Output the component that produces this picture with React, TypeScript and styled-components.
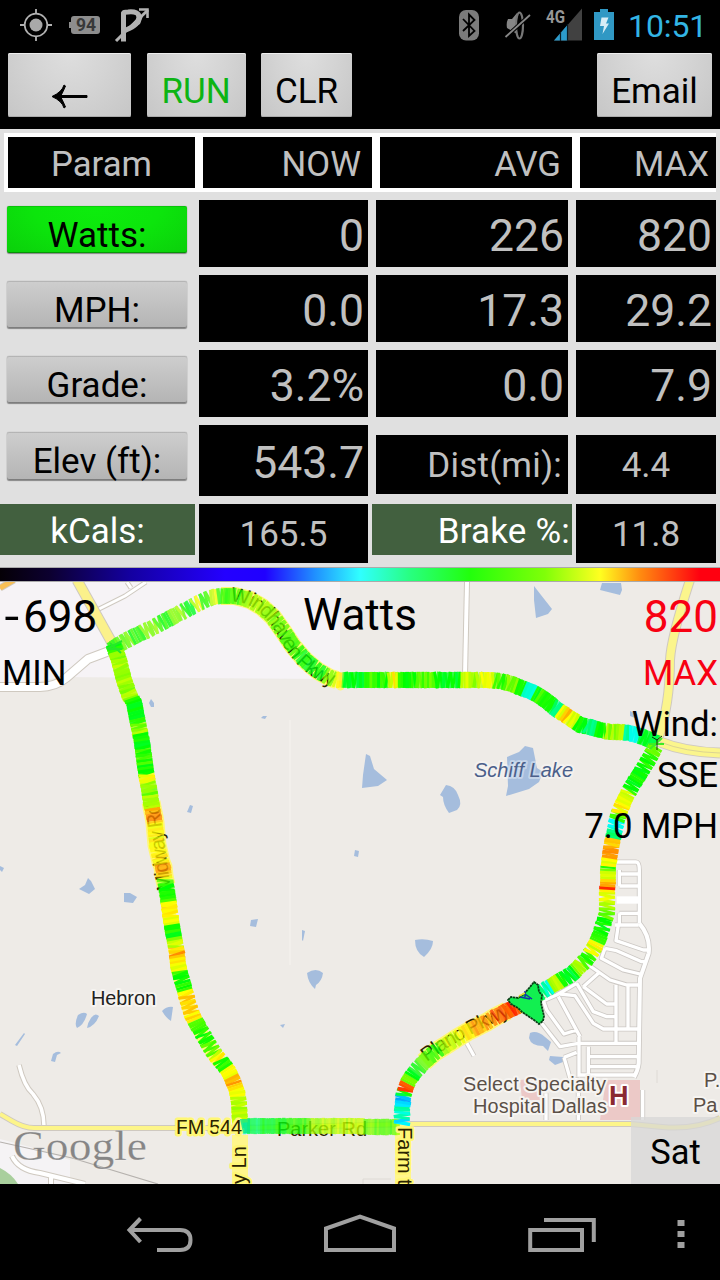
import type { ReactNode } from "react";
import styled, { createGlobalStyle } from "styled-components";

const GlobalStyle = createGlobalStyle`
    * {
        box-sizing: border-box;
    }
    body {
        margin: 0;
        background: #000;
        font-family: Roboto, "Liberation Sans", sans-serif;
    }
`;

/* ---------- ride track ---------- */

// x, y, hue (0 red, 60 yellow, 120 green, 180 cyan)
type TrackPoint = [number, number, number];

const NORTH: TrackPoint[] = [
    [112, 649, 118], [125, 641, 95], [137, 635, 115], [150, 629, 88], [165, 621, 118], [178, 614, 88], [190, 608, 130],
    [195, 605, 62], [205, 600, 110], [213, 597, 65], [221, 596, 118], [235, 596, 108], [250, 600, 85], [262, 607, 85],
    [273, 617, 95], [283, 631, 105], [293, 646, 110], [305, 660, 128], [318, 671, 122], [330, 678, 85], [337, 680, 58],
    [345, 680, 122], [358, 680, 130], [370, 680, 100], [384, 680, 115], [392, 680, 62], [402, 680, 115], [430, 680, 98],
    [440, 680, 125], [458, 680, 125], [465, 680, 65], [473, 680, 85], [487, 680, 65], [500, 681, 105], [512, 684, 90],
    [521, 688, 125], [530, 691, 172], [538, 695, 110], [548, 702, 118], [556, 709, 155], [564, 714, 50], [573, 720, 70],
    [580, 725, 130], [590, 727, 150], [600, 730, 115], [610, 732, 80], [620, 732, 85], [629, 733, 170], [637, 735, 178],
    [643, 737, 125], [657, 743, 130],
];

const WEST: TrackPoint[] = [
    [114, 646, 115], [119, 660, 80], [124, 680, 82], [130, 697, 85], [134, 702, 120], [137, 718, 118], [139, 728, 85],
    [142, 742, 120], [144, 757, 108], [146, 772, 120], [147, 778, 60], [149, 788, 92], [151, 802, 80], [153, 812, 35],
    [154, 817, 34], [155, 823, 58], [157, 845, 62], [161, 862, 58], [163, 867, 35], [164, 876, 60], [166, 885, 115],
    [168, 898, 108], [169, 905, 52], [171, 920, 65], [173, 932, 118], [175, 942, 75], [177, 953, 42], [178, 965, 60],
    [181, 977, 120], [184, 987, 115], [186, 995, 48], [192, 1015, 55], [197, 1024, 108], [205, 1038, 118],
    [212, 1050, 95], [217, 1057, 60], [224, 1065, 118], [229, 1072, 60], [233, 1081, 42], [237, 1091, 65],
    [239, 1103, 82], [240, 1123, 75],
];

const SOUTH: TrackPoint[] = [
    [242, 1126, 160], [252, 1126, 140], [268, 1126, 125], [285, 1126, 118], [300, 1126, 105], [312, 1126, 88],
    [318, 1126, 80], [330, 1126, 76], [355, 1126, 76], [372, 1127, 98], [388, 1127, 102], [400, 1127, 88],
];

const EAST: TrackPoint[] = [
    [402, 1123, 190], [402, 1117, 165], [402, 1107, 165], [403, 1104, 190], [403, 1097, 195], [404, 1093, 120],
    [405, 1091, 8], [406, 1087, 18], [409, 1080, 100], [415, 1072, 125], [424, 1062, 100], [435, 1052, 112],
    [445, 1046, 75], [457, 1038, 70], [467, 1032, 52], [477, 1027, 32], [487, 1022, 40], [495, 1017, 22],
    [507, 1011, 18], [527, 1002, 60], [540, 993, 140], [548, 988, 170], [556, 983, 68], [563, 979, 120],
    [572, 974, 130], [579, 967, 80], [587, 959, 110], [594, 948, 62], [599, 938, 115], [604, 922, 122],
    [607, 913, 90], [607, 900, 68], [607, 892, 60], [607, 889, 14], [608, 884, 50], [608, 876, 70], [608, 868, 105],
    [609, 862, 60], [610, 854, 36], [612, 843, 50], [614, 834, 160], [616, 824, 180], [618, 816, 100],
    [621, 808, 55], [625, 799, 70], [632, 786, 122], [641, 772, 120], [649, 759, 110], [656, 746, 85],
];

const rand = (n: number) => {
    const v = Math.sin(n * 127.1 + 311.7) * 43758.5453;
    return v - Math.floor(v);
};

interface Bar {
    x1: number;
    y1: number;
    x2: number;
    y2: number;
    width: number;
    color: string;
}

// one short bar across the road for every few meters ridden
const buildBars = (points: TrackPoint[], step: number, slant: number): Bar[] => {
    const bars: Bar[] = [];
    let carry = 0;
    let n = points.length;
    for (let i = 0; i < points.length - 1; i++) {
        const [ax, ay, ah] = points[i];
        const [bx, by, bh] = points[i + 1];
        const prev = points[Math.max(0, i - 1)];
        const next = points[Math.min(points.length - 1, i + 2)];
        const len = Math.hypot(bx - ax, by - ay);
        const dir = Math.hypot(next[0] - prev[0], next[1] - prev[1]) || 1;
        const ux = (next[0] - prev[0]) / dir;
        const uy = (next[1] - prev[1]) / dir;
        let d = carry;
        for (; d < len; d += step) {
            const t = d / len;
            const cx = ax + (bx - ax) * t;
            const cy = ay + (by - ay) * t;
            // GPS jitter comes in bursts, the rest of the bars lie flat
            const shaky = rand(Math.floor(n / 5) + 9) > 0.3;
            const s = shaky ? (n % 2 ? 1 : -1) * slant * (0.25 + rand(n) * 0.75) : 0;
            const half = 7.6 + rand(n + 5) * 0.6;
            const hue = ah + (bh - ah) * (t > 0.5 ? 0.85 : 0) + (rand(n + 40) - 0.5) * 18;
            bars.push({
                x1: cx - uy * half + ux * s,
                y1: cy + ux * half + uy * s,
                x2: cx + uy * half - ux * s,
                y2: cy - ux * half - uy * s,
                width: slant ? 2.4 + rand(n + 77) * 1.4 : 3.4,
                color: `hsl(${hue.toFixed(0)} 100% 50%)`,
            });
            n++;
        }
        carry = d - len;
    }
    return bars;
};

const toPath = (points: TrackPoint[]) => "M" + points.map(([x, y]) => `${x} ${y}`).join("L");

interface TrackProps {
    points: TrackPoint[];
    solid?: boolean;
}

const Track = ({ points, solid }: TrackProps) => (
    <g>
        {buildBars(points, solid ? 2.2 : 2.6, solid ? 0 : 1.9).map((b, i) => (
            <line key={i} x1={b.x1} y1={b.y1} x2={b.x2} y2={b.y2} stroke={b.color} strokeWidth={b.width} />
        ))}
    </g>
);

/* ---------- map ---------- */

const LAKES = [
    "M534 586L541 595L552 609L548 614L536 618L534 600Z",
    "M602 583H621L622 590L620 595L600 590Z",
    "M366 754L370 756L374 769L387 780L378 786L362 788L363 775Z",
    "M446 785Q455 786 458 795Q463 805 457 810L449 813Q443 805 443 797L440 795Z",
    "M507 757L519 752L525 746L533 748L537 768L543 772L539 782L529 789L506 796L508 786Z",
    "M151 699L154 703L154 707L151 707L149 703Z",
    "M263 716H267L265 719L261 718Z",
    "M190 805L193 806L191 813L187 812Z",
    "M355 850L359 851L358 857L354 856Z",
    "M88 878L91 881L95 889L89 894L79 889L85 885Z",
    "M124 893L130 893L137 897L133 903L124 902Z",
    "M251 920L258 919L256 927L250 926Z",
    "M302 930L305 931L303 941L302 940Z",
    "M307 973Q316 967 323 973Q322 981 316 985L315 989Q308 983 307 973Z",
    "M162 1011Q167 1006 173 1007L171 1021Q166 1018 162 1011Z",
    "M78 1015Q84 1011 87 1014Q84 1025 77 1028Q74 1024 78 1015Z",
    "M91 1018Q95 1012 99 1016Q95 1026 87 1028Q88 1022 91 1018Z",
    "M24 1033L25 1034L17 1046L15 1045Z",
    "M53 1054Q58 1050 61 1053L57 1055L55 1062L51 1061Z",
    "M280 1025L285 1024L283 1028Z",
    "M415 940Q424 938 433 941Q433 949 424 957Q415 952 415 940Z",
    "M530 1033Q537 1030 545 1037L551 1042L548 1051L543 1046Q531 1046 529 1038Z",
    "M550 1056L563 1057L563 1062L555 1065L549 1060Z",
    "M0 866L4 868L2 872L0 870Z",
    "M630 711L637 714L635 718L630 716Z",
];

// subdivision streets, in a 3x finer unit with its origin at (360, 870)
const STREETS =
    "M770-24H828Q838-24 838 0V160M778 0V48M775 12H836M778 48H836M778 130V162M778 130H836M765 165H836" +
    "M775 165L768 212L850 240H866M735 235L770 242L845 275H856M735 235L724 265L790 300L840 312" +
    "M690 288L750 330L800 345H838M768 345V520M804 350V480M650 340L700 425L740 440H765" +
    "M670 350L740 402H765M715 310L670 350M600 372L645 377L700 460L730 477H835" +
    "M550 392L590 375L650 340M550 392L560 420L612 492L650 480M595 380L660 500" +
    "M545 460L600 530L655 520H838M657 500V620M685 530V620M685 560H835M685 590H830" +
    "M660 615H825M612 562L650 547M612 562L630 625L655 630V750M558 670V750M848 660V750M318 515L342 558";

const Road = ({ d, color = "#fff", width }: { d: string; color?: string; width: number }) => (
    <g fill="none" strokeLinejoin="round">
        <path d={d} stroke="#cfc9c0" strokeWidth={width + 2} />
        <path d={d} stroke={color} strokeWidth={width} />
    </g>
);

const RideMap = () => (
    <MapCanvas viewBox="0 582 720 602">
        <defs>
            <path id="windhaven" d="M230 602Q256 600 277 634Q301 683 345 688" />
            <path id="midway" d="M171 890L157 792" />
            <path id="plano" d="M427 1062Q455 1040 520 1011" />
        </defs>
        <rect y="582" width="720" height="602" fill="#eeebe7" />
        <path d="M0 582H340V672L330 679L60 677L0 690Z" fill="#f6f3f6" />
        <path d="M290 720V965" stroke="#f2efeb" strokeWidth="2" />
        <path d="M0 1139L30 1147L70 1160V1184H0Z" fill="#f5f3f5" />
        <path d="M0 1168Q12 1174 18 1184H0Z" fill="#a9cf9d" />
        {LAKES.map((d) => (
            <path key={d} d={d} fill="#a5bddd" />
        ))}

        <path d="M606 1080H640V1120H600Z M520 1080L536 1078L540 1100H522Z" fill="#ecc9c7" />
        <Road d="M0 588L14 580" color="#f8bf55" width={5} />
        <Road d="M97 610L125 596L146 582M131 588L127 582" width={3} />
        <Road d="M0 687H40Q55 687 66 678L88 659L112 650" width={8} />
        <Road d="M467 582L465 676" width={4} />
        <Road d="M19 1065Q24 1086 33 1094Q44 1107 44 1126" width={3.5} />
        <Road d="M12 1156Q18 1170 40 1173L85 1184M51 1177V1184" width={4} />
        <path d="M0 1142L72 1158L158 1184" fill="none" stroke="#b5b1ad" strokeWidth="1.2" />
        <path d="M363 1184V1179H391M657 1070V1083" fill="none" stroke="#dedad5" />
        <g transform="translate(360 870) scale(.33333)" fill="none" strokeLinejoin="round">
            <path d={STREETS} stroke="#ccc8c4" strokeWidth="15" />
            <path d="M838 160Q872 200 866 250L840 325L836 580Q834 600 822 622" stroke="#ccc8c4" strokeWidth="17" />
            <path d="M838 160Q872 200 866 250L840 325L836 580Q834 600 822 622" stroke="#fff" strokeWidth="12" />
            <path d={STREETS} stroke="#fff" strokeWidth="10" />
            <path d="M770 90H838" stroke="#fff" strokeWidth="22" />
        </g>
        <Road d="M0 1114L12 1121Q24 1128 34 1128H240L410 1124H631L662 1127Q695 1130 720 1118" color="#fdf589" width={4} />
        <Road d="M77 580L116 650L130 696" color="#fbf18b" width={9} />
        <Road d="M690 580Q671 638 670 660Q670 705 658 739" color="#fbf58c" width={8} />
        <Road d="M660 742Q685 752 720 753" color="#fbf58c" width={9} />
        <path d="M660 742Q685 752 720 753" fill="none" stroke="#dcd493" />
        <path d={toPath(WEST)} fill="none" stroke="#fff774" strokeWidth="14" transform="translate(-1 0)" />
        <path d={toPath(WEST.slice(12, 21))} fill="none" stroke="#fff774" strokeWidth="19" />
        <path d={toPath(EAST.slice(10, 19))} fill="none" stroke="#fff774" strokeWidth="19" />
        <path d={toPath(NORTH.slice(10, 21))} fill="none" stroke="#fff774" strokeWidth="18" />
        <path d="M332 682Q338 694 344 689V680Z" fill="#fff774" />
        <path d="M232 1135H248V1184H232ZM395 1126H411V1184H395Z" fill="#fff68b" />

        <RoadLabel strokeWidth="0">
            <textPath href="#windhaven" textLength="138">
                Windhaven Pkwy
            </textPath>
        </RoadLabel>
        <RoadLabel strokeWidth="0">
            <textPath href="#midway" textLength="88">
                Midway Rd
            </textPath>
        </RoadLabel>
        <RoadLabel strokeWidth="0">
            <textPath href="#plano" textLength="96">
                Plano Pkwy
            </textPath>
        </RoadLabel>
        <RoadLabel x="277" y="1136" textLength="90" strokeWidth="0">
            Parker Rd
        </RoadLabel>

        {/* street names stay faintly readable below the ride */}
        <g opacity=".78">
            <Track points={NORTH} />
            <Track points={WEST.slice(0, 29)} />
            <Track points={SOUTH} solid />
            <Track points={EAST.slice(9, 20)} />
        </g>
        <Track points={NORTH.slice(21)} />
        <Track points={WEST.slice(0, 14)} />
        <Track points={WEST.slice(20)} />
        <Track points={EAST.slice(0, 10)} />
        <Track points={EAST.slice(18)} />
        <path d="M107 649L122 641M110 643L121 653M107 649H122" stroke="#25e82a" strokeWidth="2" />
        <path d="M649 744H664M650 749L662 738" stroke="#3cec24" strokeWidth="2" />
        <path d="M657 740V750M657 740L662 736M657 740L652 737" stroke="#102a10" strokeWidth="1" />

        <RoadLabel x="176" y="1134" textLength="66">
            FM 544
        </RoadLabel>
        <path d="M240 1119H250V1133H243Z" fill="#08e889" opacity=".8" />
        <RoadLabel transform="translate(246 1184) rotate(-90)">y Ln</RoadLabel>
        <RoadLabel transform="translate(398 1127) rotate(90)">Farm t</RoadLabel>

        <PlaceLabel x="91" y="1005" textLength="65">
            Hebron
        </PlaceLabel>
        <LakeLabel x="474" y="777" textLength="99">
            Schiff Lake
        </LakeLabel>
        <PoiLabel x="463" y="1091" textLength="143">
            Select Specialty
        </PoiLabel>
        <PoiLabel x="473" y="1113" textLength="134">
            Hospital Dallas
        </PoiLabel>
        <PoiLabel x="704" y="1087">P.</PoiLabel>
        <PoiLabel x="693" y="1112">Pa</PoiLabel>
        <HospitalMark x="609" y="1105">H</HospitalMark>
        <Watermark x="13" y="1160" textLength="134" lengthAdjust="spacingAndGlyphs">
            Google
        </Watermark>

        {/* rider */}
        <path
            d="M508 1000L511 997L518 998L524 994L530 987L534 982L538 985L539 992L542 995L541 1003L544 1016L543 1021L539 1024L534 1020L528 1016L522 1012L518 1008L511 1004Z"
            fill="#12ef50"
            stroke="#083d16"
            strokeWidth="1.8"
            strokeDasharray="2.5 .6"
        />
        <path d="M520 997L530 999M525 991V997M525 994L532 999" stroke="#1430a8" strokeWidth="1.5" />
        <path d="M519 996L525 993" stroke="#e5e332" strokeWidth="1.5" />
    </MapCanvas>
);

/* ---------- status bar ---------- */

const StatusBar = () => (
    <StyledStatusBar>
        <svg width="160" height="50" fill="none" stroke="#b2b2b2">
            <circle cx="36" cy="25" r="6.5" fill="#a9a9a9" stroke="none" />
            <circle cx="36" cy="25" r="11.3" strokeWidth="1.7" />
            <path d="M36 9V14M36 36V41M20 25H25M47 25H52" strokeWidth="1.8" />
            <path
                d="M74 16H97Q100 16 100 19V31Q100 34 97 34H74Q71 34 71 31V28H69V22H71V19Q71 16 74 16Z"
                fill="#8d8d8d"
                stroke="none"
            />
            <text x="76" y="31.2" fontSize="17.5" fontWeight="700" fill="#383838" stroke="none">
                94
            </text>
            <path d="M123.500 41.500V13Q124 12 128 12Q139 11 139 17Q139 25 126 30" strokeWidth="5" />
            <path d="M116 41L126 31L148 10" strokeWidth="3" />
            <path d="M139 9.500H147.500V18" strokeWidth="2.6" />
            <path d="M135 12L143 16L140 24L133 28L128 29L137 18Z" fill="#b2b2b2" stroke="none" />
        </svg>
        <StatusRight>
            <svg width="152" height="50" viewBox="455 0 152 50" fill="none">
                <rect x="459" y="10" width="20" height="30.500" rx="7" fill="#7b7b7b" />
                <path d="M463 19L474.500 31L469 36V14.500L474.500 20L463 31" stroke="#000" strokeWidth="1.8" />
                <path d="M508 19H512L517 13V34L512 31L507 28Q506 23 508 19Z" fill="#858585" />
                <ellipse cx="519.500" cy="25.500" rx="3.500" ry="13" stroke="#777" strokeWidth="2.200" />
                <path d="M504 38.500L530 15" stroke="#000" strokeWidth="4" />
                <path d="M505.500 37L530 15" stroke="#888" strokeWidth="1.800" />
                <text
                    x="546"
                    y="23"
                    fontSize="17.5"
                    fontWeight="700"
                    fill="#969696"
                    textLength="19"
                    lengthAdjust="spacingAndGlyphs"
                >
                    4G
                </text>
                <path d="M554 40.500L582 8.500V40.500Z" fill="#414141" />
                <path d="M554 40.500L567 25.500V40.500Z" fill="#2c9bcb" />
                <path d="M560.500 32V41M567.500 24V41" stroke="#0a1c24" strokeWidth="1.200" />
            </svg>
            <svg width="22" height="50" viewBox="593 0 22 50">
                <path d="M594 12H600V9H608V12H614V40H594Z" fill="#3098c4" />
                <path d="M601.500 17.500H608.500L606 23.500H609L602.500 34L604 26H600Z" fill="#d8edf6" />
            </svg>
            <Clock>10:51</Clock>
        </StatusRight>
    </StyledStatusBar>
);

/* ---------- parameter table ---------- */

interface ParamRowProps {
    label: string;
    active?: boolean;
    values: string[];
}

const ParamRow = ({ label, active, values }: ParamRowProps) => (
    <Row>
        <ParamButton $active={active}>{label}</ParamButton>
        {values.map((v, i) => (
            <Value key={i}>{v}</Value>
        ))}
    </Row>
);

const NavIcon = ({ width, children }: { width: number; children: ReactNode }) => (
    <svg width={width} height="40" fill="none" stroke="#a0a0a0" strokeWidth="4">
        {children}
    </svg>
);

const App = () => {
    return (
        <Screen>
            <GlobalStyle />
            <StatusBar />
            <Toolbar>
                <ToolButton $width={123}>
                    <svg width="38" height="25" viewBox="0 0 38 25">
                        <path
                            d="M13 1Q11 8 1 12.500Q11 17 13 24L14.500 23Q12 17 10 13.500H36V11.500H10Q12 8 14.500 2Z"
                            fill="#000"
                            stroke="#000"
                        />
                    </svg>
                </ToolButton>
                <ToolButton $width={99} $color="#0db414">
                    RUN
                </ToolButton>
                <ToolButton $width={91}>CLR</ToolButton>
                <Spacer />
                <ToolButton $width={115}>Email</ToolButton>
            </Toolbar>

            <Panel>
                <HeaderRow>
                    <HeaderCell $center>Param</HeaderCell>
                    <HeaderCell>NOW</HeaderCell>
                    <HeaderCell>AVG</HeaderCell>
                    <HeaderCell $pad={7}>MAX</HeaderCell>
                </HeaderRow>
                <ParamRow label="Watts:" active values={["0", "226", "820"]} />
                <ParamRow label="MPH:" values={["0.0", "17.3", "29.2"]} />
                <ParamRow label="Grade:" values={["3.2%", "0.0", "7.9"]} />
                <Row $height={71}>
                    <ParamButton $top={7}>Elev (ft):</ParamButton>
                    <Value>543.7</Value>
                    <SmallValue $top={10} $end>
                        Dist(mi):
                    </SmallValue>
                    <SmallValue $top={10}>4.4</SmallValue>
                </Row>
                <Row $height={59}>
                    <GreenLabel>kCals:</GreenLabel>
                    <SmallValue>165.5</SmallValue>
                    <GreenLabel $end>Brake %:</GreenLabel>
                    <SmallValue>11.8</SmallValue>
                </Row>
            </Panel>
            <Scale />

            <MapArea>
                <RideMap />
                <Overlay>
                    <div>
                        <BigText>
                            <Minus>-</Minus>698
                        </BigText>
                        <MapText $height={43}>MIN</MapText>
                    </div>
                    <Title>Watts</Title>
                    <RightColumn>
                        <BigText $color="#f80012">820</BigText>
                        <MapText $color="#f80012" $height={43}>
                            MAX
                        </MapText>
                        <WindInfo>
                            <MapText>Wind:</MapText>
                            <MapText>SSE</MapText>
                            <MapText>7.0 MPH</MapText>
                        </WindInfo>
                    </RightColumn>
                </Overlay>
                <SatButton>Sat</SatButton>
            </MapArea>

            <NavBar>
                <NavIcon width={70}>
                    <path d="M14.500 4.500L3.500 16L14.500 28" />
                    <path d="M4 16H54Q64.500 16 64.500 26Q64.500 36 54 36H31" />
                </NavIcon>
                <NavIcon width={72}>
                    <path d="M2 36V14.500L36 2.500L70 14.500V36Z" />
                </NavIcon>
                <NavIcon width={70}>
                    <path d="M2.200 16H54V36H2.200Z" />
                    <path d="M16 6H65.800V28" />
                </NavIcon>
                <NavIcon width={8}>
                    <path d="M.5 6H7.500V12H.5ZM.5 17H7.500V23H.5ZM.5 28H7.500V34H.5Z" fill="#a0a0a0" stroke="none" />
                </NavIcon>
            </NavBar>
        </Screen>
    );
};

const Screen = styled.div`
    width: 720px;
    height: 1280px;
    display: flex;
    flex-direction: column;
    overflow: hidden;
    background: #000;
`;

const StyledStatusBar = styled.div`
    height: 50px;
    flex: none;
    display: flex;
    justify-content: space-between;
`;

const StatusRight = styled.div`
    display: flex;
    width: 265px;

    svg + svg {
        margin-left: -14px;
    }
`;

const Clock = styled.span`
    margin-left: 13px;
    line-height: 52px;
    font-size: 32px;
    color: #33b5e5;
    letter-spacing: -0.1px;
`;

const Toolbar = styled.div`
    height: 79px;
    flex: none;
    display: flex;
    align-items: flex-start;
    padding: 3px 8px 0;
`;

const ToolButton = styled.button<{ $width: number; $color?: string }>`
    width: ${(props) => props.$width}px;
    height: 64px;
    border: 0;
    border-radius: 2px;
    padding: 12px 0 0;
    display: flex;
    justify-content: center;
    align-items: center;
    font: 35px Roboto, sans-serif;
    color: ${(props) => props.$color || "#000"};
    background: radial-gradient(ellipse at 50% 0, #dedede 0%, #d4d4d4 45%, #c6c6c6 100%);
    box-shadow: inset 0 1px #eee, inset 0 -1px #aaa;

    & + & {
        margin-left: 15.5px;
    }
    svg {
        margin-top: 10px;
    }
`;

const Spacer = styled.div`
    flex: 1;
`;

const Panel = styled.div`
    height: 438px;
    flex: none;
    padding-top: 4px;
    display: flex;
    flex-direction: column;
    gap: 8px;
    background: #e0e0e0;
`;

const HeaderRow = styled.div`
    margin: 0 4px;
    padding: 4px 0 4px 4px;
    height: 59px;
    display: grid;
    grid-template-columns: 187px 169px 192px 136px;
    gap: 8px;
    background: #fff;
`;

const HeaderCell = styled.div<{ $center?: boolean; $pad?: number }>`
    height: 51px;
    padding: 2px ${(props) => (props.$center ? 0 : props.$pad || 11)}px 0 0;
    line-height: 51px;
    text-align: ${(props) => (props.$center ? "center" : "right")};
    font-size: 34.7px;
    color: #c0c0c0;
    background: #000;
`;

const Row = styled.div<{ $height?: number }>`
    height: ${(props) => props.$height || 67}px;
    display: grid;
    grid-template-columns: 191px 169px 192px 140px;
    column-gap: 8px;
    align-items: start;
`;

const ParamButton = styled.button<{ $active?: boolean; $top?: number }>`
    margin: ${(props) => props.$top || 5.5}px 0 0 7px;
    width: 180px;
    height: 47.5px;
    padding: 12px 0 0;
    border: 0;
    border-radius: 2px;
    font: 35px/36px Roboto, sans-serif;
    white-space: nowrap;
    color: #000;
    background: ${(props) =>
        props.$active
            ? "radial-gradient(ellipse at 50% 0, #0ded0d 0%, #0ce50c 50%, #0bcf0b 100%)"
            : "linear-gradient(#cecece, #b4b4b4)"};
    box-shadow: 0 1px 1px #888, inset 0 -1px rgba(0, 0, 0, 0.3), inset 0 1px rgba(0, 0, 0, 0.12),
        0 0 1px rgba(0, 0, 0, 0.4);
`;

const Value = styled.div`
    height: 100%;
    padding: 4px 4px 0 0;
    display: flex;
    align-items: center;
    justify-content: flex-end;
    font-size: 44.5px;
    color: #c0c0c0;
    background: #000;
`;

const SmallValue = styled.div<{ $top?: number; $end?: boolean }>`
    height: 59px;
    margin-top: ${(props) => props.$top || 0}px;
    padding: 2px ${(props) => (props.$end ? 6 : 0)}px 0 0;
    display: flex;
    align-items: center;
    justify-content: ${(props) => (props.$end ? "flex-end" : "center")};
    font-size: 35px;
    letter-spacing: ${(props) => (props.$end ? 0.2 : 0)}px;
    color: #c0c0c0;
    background: #000;
`;

const GreenLabel = styled.div<{ $end?: boolean }>`
    height: 51px;
    margin: ${(props) => (props.$end ? "0 -4px" : "0 -4px 0 0")};
    padding-top: 2px;
    padding-right: ${(props) => (props.$end ? 2 : 0)}px;
    line-height: 51px;
    font-size: 35px;
    letter-spacing: ${(props) => (props.$end ? 0.2 : 0)}px;
    text-align: ${(props) => (props.$end ? "right" : "center")};
    color: #fff;
    background: #42603f;
`;

const Scale = styled.div`
    height: 15px;
    flex: none;
    border: solid #aaa;
    border-width: 1px 0;
    background: linear-gradient(
        90deg,
        #050006 0,
        #0c0030 50px,
        #1400a0 130px,
        #2400ff 225px,
        #2000ff 265px,
        #2090ff 315px,
        #30ffff 360px,
        #28ff80 410px,
        #22ff0c 470px,
        #80ff08 545px,
        #ffff20 600px,
        #ff8c10 640px,
        #ff0010 700px
    );
`;

const MapArea = styled.div`
    position: relative;
    height: 602px;
    flex: none;
    overflow: hidden;
`;

const MapCanvas = styled.svg`
    display: block;
    width: 720px;
    height: 602px;
`;

const MapLabel = styled.text`
    font-family: "Liberation Sans", sans-serif;
    font-size: 20px;
    paint-order: stroke;
    stroke: #f6f4f1;
    stroke-width: 4px;
    stroke-linejoin: round;
`;

const PlaceLabel = styled(MapLabel)`
    fill: #222;
`;

const LakeLabel = styled(MapLabel)`
    font-style: italic;
    fill: #4b5f8a;
    stroke: rgba(255, 255, 255, 0.35);
`;

const PoiLabel = styled(MapLabel)`
    fill: #5b5048;
`;

const RoadLabel = styled.text`
    font-family: "Liberation Sans", sans-serif;
    font-size: 20px;
    fill: #2a2200;
    stroke: #fff774;
    paint-order: stroke;
    stroke-linejoin: round;

    &:not([stroke-width]) {
        stroke-width: 5px;
    }
`;

const HospitalMark = styled(MapLabel)`
    font-size: 27px;
    font-weight: 700;
    fill: #8a2a32;
    stroke: #fff;
`;

const Watermark = styled.text`
    font-family: "Liberation Serif", serif;
    font-size: 43px;
    fill: rgba(115, 115, 115, 0.85);
    stroke: rgba(255, 255, 255, 0.4);
    stroke-width: 0.5px;
`;

const Overlay = styled.div`
    position: absolute;
    inset: 0;
    display: grid;
    grid-template-columns: 200px 1fr 200px;
    padding: 0 2px;
`;

const BigText = styled.div<{ $color?: string }>`
    line-height: 70px;
    font-size: 44px;
    color: ${(props) => props.$color || "#000"};
`;

const Minus = styled.span`
    display: inline-block;
    width: 21px;
    text-indent: 2px;
    transform: scaleX(1.2);
    transform-origin: left;
`;

const MapText = styled.div<{ $color?: string; $height?: number }>`
    line-height: ${(props) => props.$height || 51}px;
    font-size: 34.7px;
    color: ${(props) => props.$color || "#000"};
`;

const Title = styled(BigText)`
    line-height: 67px;
    text-align: center;
`;

const RightColumn = styled.div`
    text-align: right;
`;

const WindInfo = styled.div`
    padding-top: 4px;
`;

const SatButton = styled.div`
    position: absolute;
    right: 0;
    bottom: 0;
    width: 89px;
    height: 67px;
    line-height: 71px;
    text-align: center;
    font-size: 34.5px;
    color: #000;
    background: rgba(215, 215, 215, 0.75);
`;

const NavBar = styled.div`
    height: 96px;
    flex: none;
    display: grid;
    grid-template-columns: 198px 204px 149px 1fr;
    padding: 30px 0 0 126px;
`;

export default App;
